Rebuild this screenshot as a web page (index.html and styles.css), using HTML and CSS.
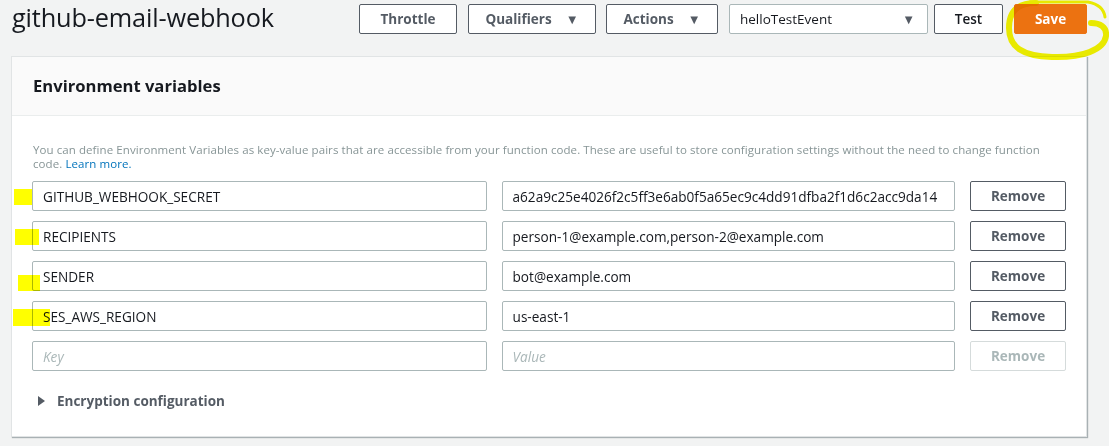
FILE: index.html
```html
<!DOCTYPE html>
<html>
<head>
<meta charset="utf-8">
<link rel="stylesheet" href="styles.css">
</head>
<body>
<div class="page">
  <header class="topbar">
    <h1 class="title">github-email-webhook</h1>
    <div class="actions">
      <button class="btn w-throttle">Throttle</button>
      <button class="btn w-qual">Qualifiers <span class="caret">&#9660;</span></button>
      <button class="btn w-act">Actions <span class="caret">&#9660;</span></button>
      <div class="select"><span>helloTestEvent</span><span class="caret">&#9660;</span></div>
      <button class="btn w-test">Test</button>
      <button class="btn btn-primary">Save</button>
    </div>
  </header>

  <section class="panel">
    <div class="panel-head">Environment variables</div>
    <div class="panel-body">
      <p class="desc">You can define Environment Variables as key-value pairs that are accessible from your function code. These are useful to store configuration settings without the need to change function code. <a href="#" class="link">Learn more.</a></p>
      <div class="rows">
        <div class="row">
          <div class="input">GITHUB_WEBHOOK_SECRET</div>
          <div class="input clip">a62a9c25e4026f2c5ff3e6ab0f5a65ec9c4dd91dfba2f1d6c2acc9da14</div>
          <button class="btn remove">Remove</button>
        </div>
        <div class="row">
          <div class="input">RECIPIENTS</div>
          <div class="input">person-1@example.com,person-2@example.com</div>
          <button class="btn remove">Remove</button>
        </div>
        <div class="row">
          <div class="input">SENDER</div>
          <div class="input">bot@example.com</div>
          <button class="btn remove">Remove</button>
        </div>
        <div class="row">
          <div class="input">SES_AWS_REGION</div>
          <div class="input">us-east-1</div>
          <button class="btn remove">Remove</button>
        </div>
        <div class="row">
          <div class="input placeholder">Key</div>
          <div class="input placeholder">Value</div>
          <button class="btn remove disabled">Remove</button>
        </div>
      </div>
      <div class="expander"><span class="tri"></span>Encryption configuration</div>
    </div>
  </section>

  <svg class="marks" width="1109" height="446" viewBox="0 0 1109 446">
    <path d="M1036,3 C1016,3 1009,13 1009,28 C1009,47 1022,56 1052,57 C1082,58 1104,50 1106,36 C1107,27 1100,23 1091,23" fill="none" stroke="#f5f500" stroke-width="6" stroke-linecap="round"/>
    <path d="M1030,2 L1088,2 C1099,4 1104,10 1105,17" fill="none" stroke="#f5f500" stroke-width="3" stroke-linecap="round"/>
    <rect x="14" y="189" width="18" height="16" fill="#ffff00"/>
    <rect x="15" y="229" width="24" height="16" fill="#ffff00"/>
    <rect x="18" y="275" width="22" height="16" fill="#ffff00"/>
    <rect x="13" y="309" width="37" height="17" fill="#ffff00"/>
  </svg>
</div>
</body>
</html>
```
FILE: styles.css
```css
* { box-sizing: border-box; }
html, body { margin: 0; padding: 0; }
body {
  background: #f2f3f3;
  font-family: "Open Sans", "Noto Sans", sans-serif;
  color: #16191f;
  width: 1109px;
  height: 446px;
  overflow: hidden;
}
.page { position: relative; width: 1109px; height: 446px; }

.topbar {
  display: flex;
  align-items: flex-start;
  height: 56px;
  padding: 4px 22px 0 12px;
}
.title {
  margin: 0;
  font-size: 25.3px;
  font-weight: 400;
  line-height: 30px;
  letter-spacing: -0.15px;
  color: #16191f;
  flex: 1;
  margin-top: -2px;
}
.actions { display: flex; }

.btn {
  font-family: inherit;
  height: 30px;
  border: 1px solid #545b64;
  border-radius: 2px;
  background: #fff;
  color: #545b64;
  font-weight: 700;
  font-size: 13.5px;
  padding: 0;
  display: flex;
  align-items: center;
  justify-content: center;
  gap: 14px;
}
.caret { font-size: 13px; color: #545b64; line-height: 1; }
.w-throttle { width: 98px; }
.w-qual { width: 128px; margin-left: 11px; }
.w-act { width: 112px; margin-left: 10px; }
.select { margin-left: 11px; }
.w-test { width: 69px; margin-left: 6px; font-weight: 600; color: #16191f; }
.btn-primary {
  width: 73px;
  margin-left: 11px;
  background: #ec7211;
  border-color: #ec7211;
  color: #fff;
}
.select {
  width: 199px;
  height: 30px;
  background: #fff;
  border: 1px solid #aab7b8;
  border-radius: 2px;
  display: flex;
  align-items: center;
  justify-content: space-between;
  padding: 0 12px 0 10px;
  font-size: 13.5px;
}
.select .caret { color: #545b64; font-size: 13px; }

.panel {
  margin-left: 11px;
  width: 1076px;
  height: 381px;
  background: #fff;
  border: 1px solid #e1e4e5;
  box-shadow: 1px 1px 1px rgba(0,28,36,0.3);
}
.panel-head {
  height: 59px;
  background: #fafafa;
  border-bottom: 1px solid #eaeded;
  padding-left: 21px;
  display: flex;
  align-items: center;
  font-size: 16.6px;
  font-weight: 700;
  color: #16191f;
  padding-bottom: 1px;
}
.panel-body { padding: 27px 20px 0 20px; }
.desc {
  margin: 0 0 10px 1px;
  font-size: 11.5px;
  line-height: 14px;
  letter-spacing: 0.08px;
  color: #879596;
  width: 1020px;
}
.link { color: #0073bb; text-decoration: none; }

.rows { display: flex; flex-direction: column; gap: 10px; }
.row { display: flex; gap: 15px; }
.input {
  width: 455px;
  height: 30px;
  border: 1px solid #aab7b8;
  border-radius: 2px;
  padding: 0 10px;
  font-size: 13.6px;
  display: flex;
  align-items: center;
  white-space: nowrap;
  overflow: hidden;
  color: #16191f;
}
.row .input + .input { width: 454px; }
.placeholder { color: #aab7b8; font-style: italic; }
.remove { width: 96px; }
.remove.disabled { border-color: #d5dbdb; color: #aab7b8; }

.expander {
  margin-top: 21px;
  margin-left: 6px;
  display: flex;
  align-items: center;
  font-size: 13.5px;
  font-weight: 700;
  color: #545b64;
}
.tri {
  width: 0; height: 0;
  border-top: 5px solid transparent;
  border-bottom: 5px solid transparent;
  border-left: 7px solid #545b64;
  margin-right: 12px;
}

.marks {
  position: absolute;
  left: 0; top: 0;
  pointer-events: none;
  mix-blend-mode: multiply;
}
```
